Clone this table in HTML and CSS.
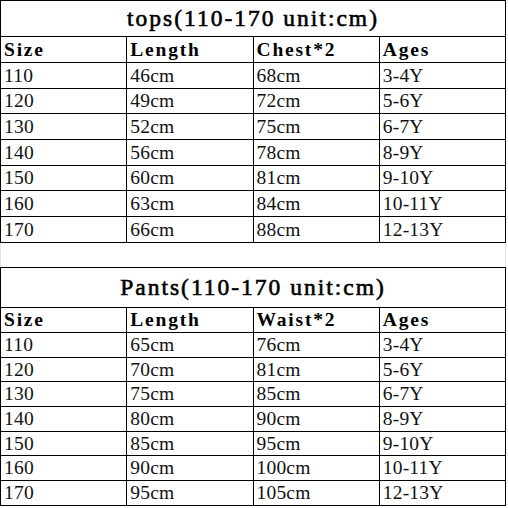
FILE: index.html
```html
<!DOCTYPE html>
<html>
<head>
<meta charset="utf-8">
<link rel="stylesheet" href="styles.css">
</head>
<body>
<div class="sheet">
  <table class="size-table tops">
    <tr class="title"><th colspan="4">tops(110-170 unit:cm)</th></tr>
    <tr class="head"><th>Size</th><th>Length</th><th>Chest*2</th><th>Ages</th></tr>
    <tr><td>110</td><td>46cm</td><td>68cm</td><td>3-4Y</td></tr>
    <tr><td>120</td><td>49cm</td><td>72cm</td><td>5-6Y</td></tr>
    <tr><td>130</td><td>52cm</td><td>75cm</td><td>6-7Y</td></tr>
    <tr><td>140</td><td>56cm</td><td>78cm</td><td>8-9Y</td></tr>
    <tr><td>150</td><td>60cm</td><td>81cm</td><td>9-10Y</td></tr>
    <tr><td>160</td><td>63cm</td><td>84cm</td><td>10-11Y</td></tr>
    <tr><td>170</td><td>66cm</td><td>88cm</td><td>12-13Y</td></tr>
  </table>
  <div class="gap"></div>
  <table class="size-table pants">
    <tr class="title"><th colspan="4">Pants(110-170 unit:cm)</th></tr>
    <tr class="head"><th>Size</th><th>Length</th><th>Waist*2</th><th>Ages</th></tr>
    <tr><td>110</td><td>65cm</td><td>76cm</td><td>3-4Y</td></tr>
    <tr><td>120</td><td>70cm</td><td>81cm</td><td>5-6Y</td></tr>
    <tr><td>130</td><td>75cm</td><td>85cm</td><td>6-7Y</td></tr>
    <tr><td>140</td><td>80cm</td><td>90cm</td><td>8-9Y</td></tr>
    <tr><td>150</td><td>85cm</td><td>95cm</td><td>9-10Y</td></tr>
    <tr><td>160</td><td>90cm</td><td>100cm</td><td>10-11Y</td></tr>
    <tr><td>170</td><td>95cm</td><td>105cm</td><td>12-13Y</td></tr>
  </table>
</div>
</body>
</html>
```

FILE: styles.css
```css
html, body {
  margin: 0;
  padding: 0;
  background: #fff;
}

.sheet {
  width: 506px;
  font-family: "Liberation Serif", "Times New Roman", serif;
  color: #000;
}

.size-table {
  width: 506px;
  border-collapse: collapse;
  table-layout: fixed;
}

.size-table th,
.size-table td {
  border: 1px solid #000;
  padding: 0 0 0 3px;
  text-align: left;
  vertical-align: middle;
  line-height: 1;
  white-space: nowrap;
  overflow: hidden;
}

.size-table td {
  font-size: 19.5px;
  font-weight: normal;
  letter-spacing: 0.2px;
  color: #111;
}

.size-table .head th {
  font-size: 19.5px;
  font-weight: bold;
  letter-spacing: 1.8px;
}

.size-table .title th {
  text-align: center;
  font-size: 23.5px;
  font-weight: normal;
  -webkit-text-stroke: 0.6px #000;
  letter-spacing: 2px;
  padding: 1px 0 0 0;
}

.tops .title { height: 36px; }
.tops .head { height: 26px; }
.tops tr { height: 25.7px; }

.pants .title { height: 40px; }
.pants .head { height: 25px; }
.pants tr { height: 24.7px; }

.gap {
  height: 24px;
  border-left: 1px solid #e4e4e4;
  border-right: 1px solid #e4e4e4;
  width: 506px;
  box-sizing: border-box;
}
```
